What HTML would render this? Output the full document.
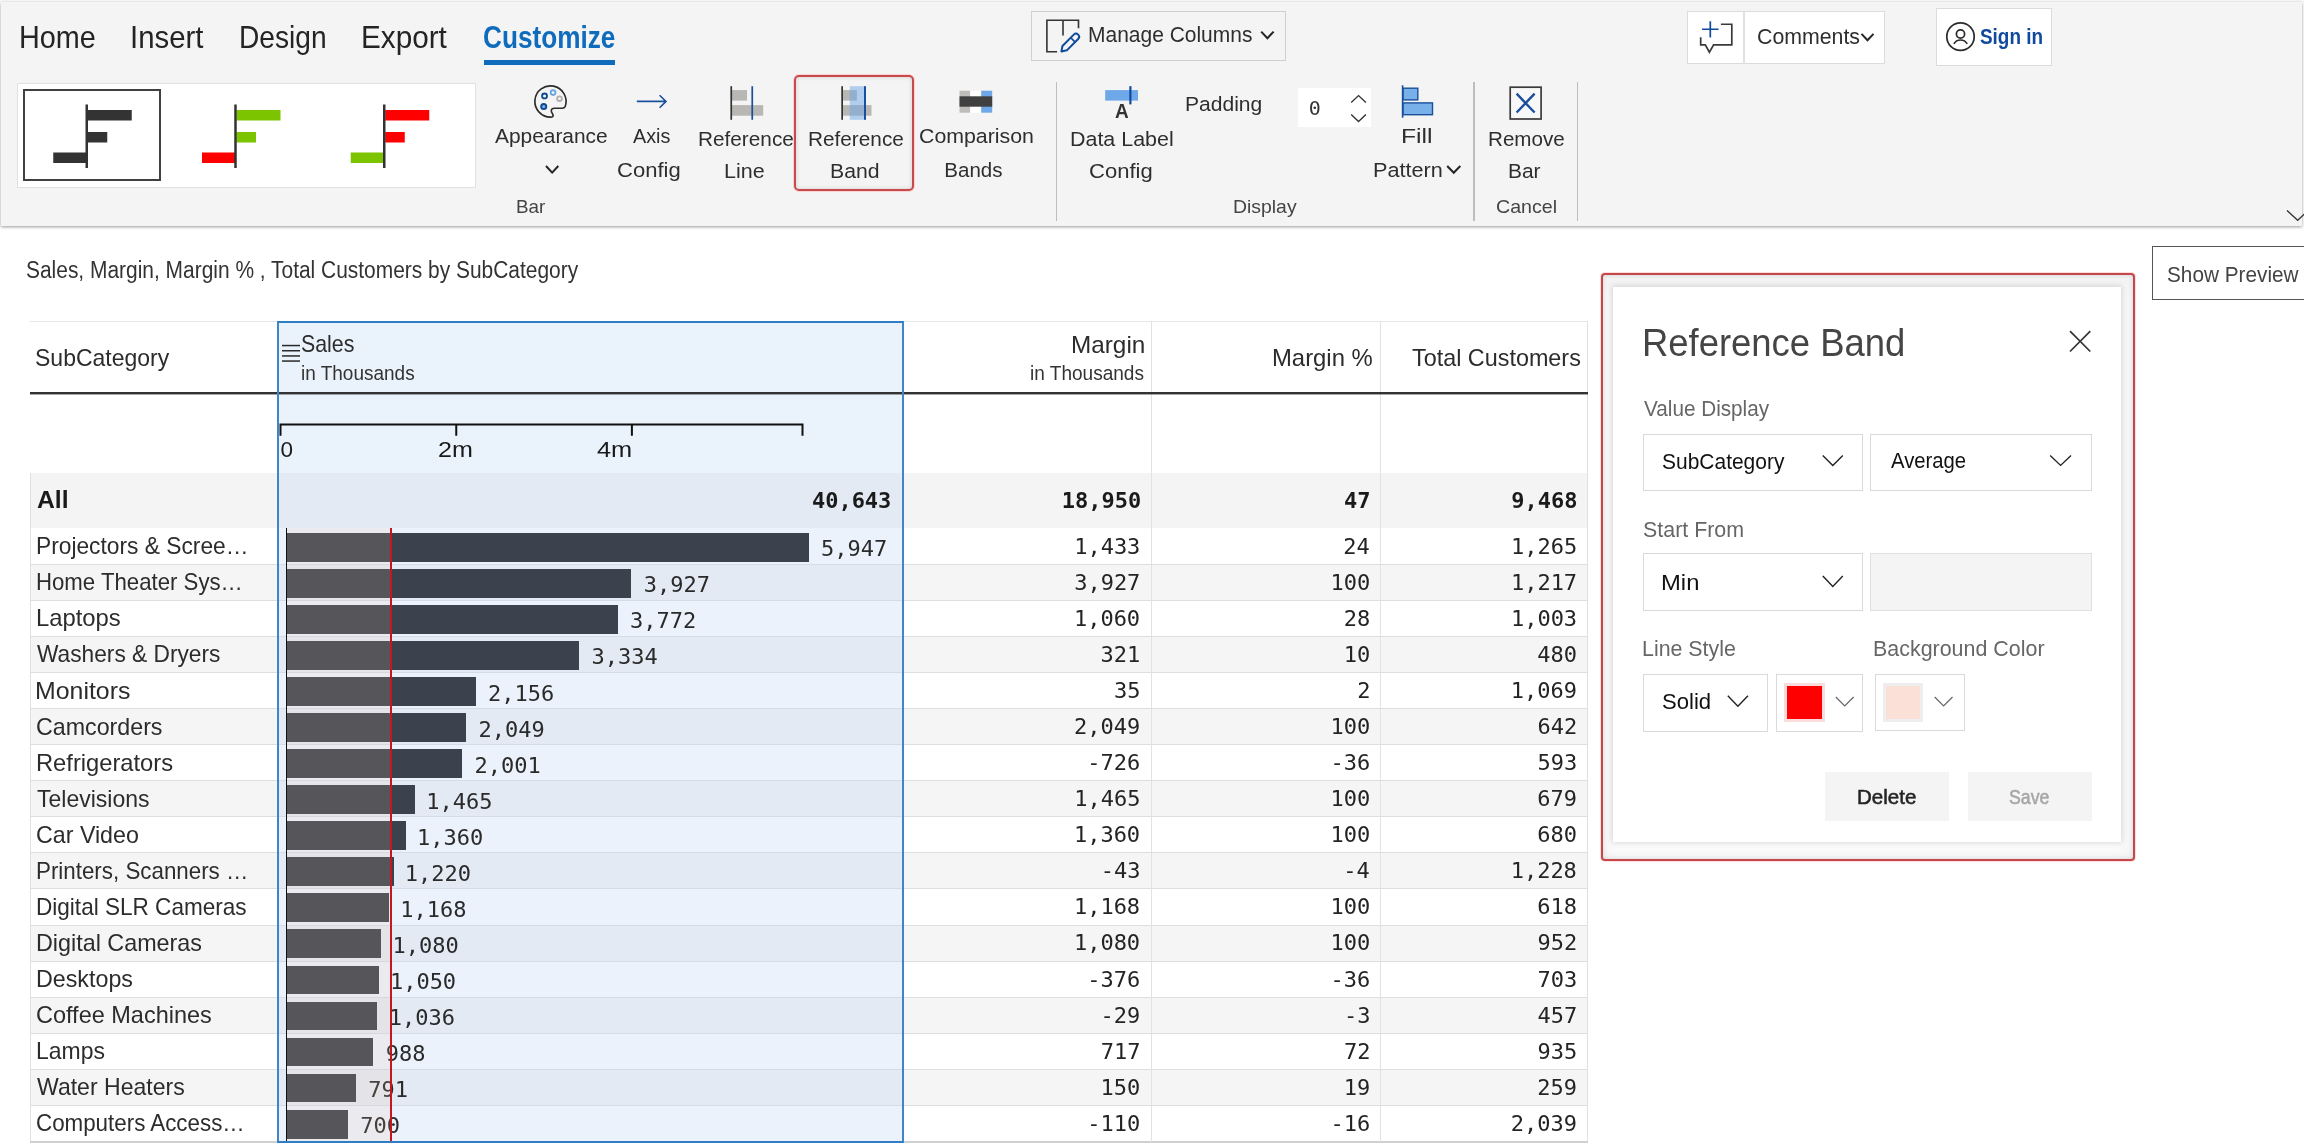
<!DOCTYPE html>
<html lang="en"><head><meta charset="utf-8"><title>Reference Band</title>
<style>
html,body{margin:0;padding:0;background:#fff;}
body{width:2304px;height:1148px;overflow:hidden;font-family:"Liberation Sans",sans-serif;}
#app{position:relative;width:2304px;height:1148px;overflow:hidden;background:transparent;will-change:transform;}
#app div,#app svg{position:absolute;box-sizing:border-box;}
.t{display:flex;align-items:baseline;white-space:nowrap;height:140px;}
.t>i{display:block;width:0;height:100px;flex:none;}
.t>span{display:block;flex:none;transform-origin:0 50%;line-height:1.2;}
.ic{overflow:visible;}
.m{font-family:"DejaVu Sans Mono","Liberation Mono",monospace;}
.sb>span{-webkit-text-stroke:0.55px currentColor;}

</style></head>
<body>
<div id="app">
<div style="left:0.00px;top:0.00px;width:2304.00px;height:2.00px;background:#f8f8f8;"></div>
<div class="ribbon" style="left:1.00px;top:2.00px;width:2301.00px;height:224.30px;background:#f4f4f4;box-shadow:0 1px 3px rgba(0,0,0,.4);"></div>
<div class="t" style="left:18.89px;top:-52.00px;"><i></i><span style="font-size:30.5px;color:#242424;transform:scaleX(0.9446);">Home</span></div>
<div class="t" style="left:129.81px;top:-52.00px;"><i></i><span style="font-size:30.5px;color:#242424;transform:scaleX(0.9618);">Insert</span></div>
<div class="t" style="left:239.19px;top:-52.00px;"><i></i><span style="font-size:30.5px;color:#242424;transform:scaleX(0.9227);">Design</span></div>
<div class="t" style="left:360.57px;top:-52.00px;"><i></i><span style="font-size:30.5px;color:#242424;transform:scaleX(0.9737);">Export</span></div>
<div class="t" style="left:483.43px;top:-52.00px;"><i></i><span style="font-size:30.5px;color:#0f6cbd;font-weight:700;transform:scaleX(0.8588);">Customize</span></div>
<div style="left:484.00px;top:60.00px;width:131.00px;height:4.50px;background:#0f6cbd;"></div>
<div style="left:16.50px;top:82.50px;width:459.50px;height:105.00px;background:#fff;border:1px solid #e1e1e1;"></div>
<div style="left:23.00px;top:89.00px;width:137.50px;height:92.00px;border:2px solid #404040;background:#fff;"></div>
<svg class="ic" style="left:40px;top:100px" width="420" height="72" viewBox="40 100 420 72"><rect x="87.75" y="110" width="44" height="10.5" fill="#333"/><rect x="87.75" y="132" width="19.5" height="10.5" fill="#333"/><rect x="53.25" y="152.5" width="33" height="10.5" fill="#333"/><rect x="85.5" y="104.5" width="2.5" height="63.5" fill="#333"/><rect x="236.5" y="110" width="44" height="10.5" fill="#7cc400"/><rect x="236.5" y="132" width="19.5" height="10.5" fill="#7cc400"/><rect x="202.0" y="152.5" width="33" height="10.5" fill="#ff0000"/><rect x="234.25" y="104.5" width="2.5" height="63.5" fill="#333"/><rect x="385.25" y="110" width="44" height="10.5" fill="#ff0000"/><rect x="385.25" y="132" width="19.5" height="10.5" fill="#ff0000"/><rect x="350.75" y="152.5" width="33" height="10.5" fill="#7cc400"/><rect x="383.0" y="104.5" width="2.5" height="63.5" fill="#333"/></svg>
<svg class="ic" style="left:532px;top:84px" width="36" height="36" viewBox="532 84 36 36"><path d="M550.800 117.050A15.600 15.600 0 1 1 565.300 106.300Q564.300 108.200 562.200 108.200H554.600Q551.200 108.200 551.300 111Q551.500 112.500 552.600 113.800Q553.600 115.600 552.600 116.600Q552 117.100 550.800 117.050Z" fill="none" stroke="#2c2c2c" stroke-width="1.650" stroke-linejoin="round"/><circle cx="544.540" cy="95.900" r="2.450" fill="#eef8ff" stroke="#0f4a8c" stroke-width="1.850"/><circle cx="553.060" cy="92.600" r="2.350" fill="#f2faff" stroke="#6aa5dc" stroke-width="1.850"/><circle cx="559.500" cy="98.700" r="2.350" fill="#fafafa" stroke="#b0b0b0" stroke-width="1.850"/><circle cx="543.700" cy="106.600" r="2.550" fill="#78b4f8" stroke="#0f4a8c" stroke-width="1.900"/></svg>
<div class="t" style="left:494.75px;top:42.50px;"><i></i><span style="font-size:20.5px;color:#2e2e2e;transform:scaleX(1.0192);">Appearance</span></div>
<svg class="ic" style="left:544px;top:163px" width="16" height="12" viewBox="544 163 16 12"><path d="M546 166L552.15 172.6L558.3 166" fill="none" stroke="#242424" stroke-width="2" stroke-linecap="butt" stroke-linejoin="miter"/></svg>
<svg class="ic" style="left:634px;top:92px" width="36" height="18" viewBox="634 92 36 18"><path d="M636.8 101.4H666M659.6 95.2L666 101.4L659.6 107.7" fill="none" stroke="#1a4f9c" stroke-width="1.6"/></svg>
<div class="t" style="left:633.00px;top:42.50px;"><i></i><span style="font-size:20.5px;color:#2e2e2e;transform:scaleX(0.9658);">Axis</span></div>
<div class="t" style="left:617.42px;top:76.50px;"><i></i><span style="font-size:20.5px;color:#2e2e2e;transform:scaleX(1.0755);">Config</span></div>
<svg class="ic" style="left:728px;top:84px" width="38" height="38" viewBox="728 84 38 38"><rect x="732" y="90.1" width="15" height="10.5" fill="#b9b7b3"/><rect x="732" y="105.100" width="31.200" height="10.600" fill="#b9b7b3"/><rect x="730.400" y="86.200" width="1.700" height="33.600" fill="#333"/><rect x="751.400" y="86.200" width="1.700" height="33.600" fill="#1a4f9c"/></svg>
<div class="t" style="left:698.08px;top:46.25px;"><i></i><span style="font-size:20.5px;color:#2e2e2e;transform:scaleX(1.0130);">Reference</span></div>
<div class="t" style="left:724.27px;top:77.50px;"><i></i><span style="font-size:20.5px;color:#2e2e2e;transform:scaleX(1.0497);">Line</span></div>
<div style="left:794.20px;top:74.80px;width:119.80px;height:116.20px;border:2px solid #c94a4d;border-radius:5px;box-shadow:0 0 0 1px rgba(255,170,170,.45),inset 0 0 4px rgba(0,0,0,.16);background:#f4f4f4;"></div>
<svg class="ic" style="left:839px;top:84px" width="38" height="38" viewBox="839 84 38 38"><rect x="843" y="90.1" width="13.900" height="10.500" fill="#b9b7b3"/><rect x="843" y="105.100" width="28.500" height="10.600" fill="#b9b7b3"/><rect x="849.750" y="86.200" width="14.500" height="33.600" fill="#6ea8e8" fill-opacity=".5"/><rect x="841.300" y="86.200" width="1.700" height="33.600" fill="#333"/><rect x="864" y="86.200" width="2" height="33.600" fill="#1a4f9c"/></svg>
<div class="t" style="left:808.08px;top:46.25px;"><i></i><span style="font-size:20.5px;color:#2e2e2e;transform:scaleX(1.0130);">Reference</span></div>
<div class="t" style="left:829.79px;top:77.50px;"><i></i><span style="font-size:20.5px;color:#2e2e2e;transform:scaleX(1.0345);">Band</span></div>
<svg class="ic" style="left:958px;top:89px" width="36" height="26" viewBox="958 89 36 26"><rect x="959.500" y="90.700" width="10.800" height="22" fill="#bfbdb9"/><rect x="970.300" y="90.700" width="10.900" height="22" fill="#fff"/><rect x="981.200" y="90.700" width="11" height="22" fill="#6ea8e8"/><rect x="959.500" y="96.300" width="32.700" height="10.400" fill="#404040"/></svg>
<div class="t" style="left:918.71px;top:42.50px;"><i></i><span style="font-size:20.5px;color:#2e2e2e;transform:scaleX(1.0397);">Comparison</span></div>
<div class="t" style="left:944.35px;top:76.50px;"><i></i><span style="font-size:20.5px;color:#2e2e2e;">Bands</span></div>
<div class="t" style="left:515.71px;top:112.50px;"><i></i><span style="font-size:19px;color:#444;transform:scaleX(0.9910);">Bar</span></div>
<div style="left:1056.10px;top:82.00px;width:1.30px;height:139.00px;background:#bdbdbd;"></div>
<div style="left:1473.30px;top:82.00px;width:1.30px;height:139.00px;background:#bdbdbd;"></div>
<div style="left:1576.90px;top:82.00px;width:1.30px;height:139.00px;background:#bdbdbd;"></div>
<svg class="ic" style="left:1104px;top:85px" width="36" height="22" viewBox="1104 85 36 22"><rect x="1105.200" y="90.100" width="32.800" height="10.500" fill="#6ea8e8"/><rect x="1129.300" y="86.200" width="2.200" height="18.200" fill="#0f4a9c"/></svg>
<div class="t" style="left:1114.56px;top:17.75px;"><i></i><span style="font-size:19.4px;color:#333;font-weight:700;transform:scaleX(0.9808);">A</span></div>
<div class="t" style="left:1070.28px;top:46.25px;"><i></i><span style="font-size:20.5px;color:#2e2e2e;transform:scaleX(1.0452);">Data Label</span></div>
<div class="t" style="left:1088.92px;top:77.50px;"><i></i><span style="font-size:20.5px;color:#2e2e2e;transform:scaleX(1.0755);">Config</span></div>
<div class="t" style="left:1185.31px;top:10.50px;"><i></i><span style="font-size:20.5px;color:#2e2e2e;transform:scaleX(1.0270);">Padding</span></div>
<div style="left:1298.20px;top:87.80px;width:72.60px;height:39.00px;background:#fff;"></div>
<div class="t" style="left:1308.75px;top:15.00px;"><i></i><span class="m" style="font-size:20px;color:#333;">0</span></div>
<svg class="ic" style="left:1349px;top:93px" width="20" height="32" viewBox="1349 93 20 32"><path d="M1351.2 102.5L1358.5500000000002 95.6L1365.9 102.5" fill="none" stroke="#333" stroke-width="1.4" stroke-linecap="butt" stroke-linejoin="miter"/><path d="M1351.2 114.6L1358.5500000000002 121.5L1365.9 114.6" fill="none" stroke="#333" stroke-width="1.4" stroke-linecap="butt" stroke-linejoin="miter"/></svg>
<svg class="ic" style="left:1400px;top:84px" width="36" height="36" viewBox="1400 84 36 36"><rect x="1403" y="88.200" width="14.800" height="11.700" fill="#78b0ea" stroke="#1a4f9c" stroke-width="1.4"/><rect x="1403" y="102.900" width="29.500" height="11.800" fill="#78b0ea" stroke="#1a4f9c" stroke-width="1.4"/><rect x="1401.800" y="85.250" width="1.600" height="32.500" fill="#1a4f9c"/></svg>
<div class="t" style="left:1401.26px;top:43.00px;"><i></i><span style="font-size:20.5px;color:#2e2e2e;transform:scaleX(1.2069);">Fill</span></div>
<div class="t" style="left:1372.76px;top:76.75px;"><i></i><span style="font-size:20.5px;color:#2e2e2e;transform:scaleX(1.0570);">Pattern</span></div>
<svg class="ic" style="left:1445px;top:163px" width="18" height="12" viewBox="1445 163 18 12"><path d="M1447.2 166L1453.75 172.8L1460.3 166" fill="none" stroke="#242424" stroke-width="2" stroke-linecap="butt" stroke-linejoin="miter"/></svg>
<svg class="ic" style="left:1507px;top:84px" width="38" height="38" viewBox="1507 84 38 38"><rect x="1510.200" y="87.200" width="30.900" height="31.800" fill="#f8f8f8" stroke="#3a3a3a" stroke-width="1.700"/><path d="M1516.600 93.700L1534.600 112.500M1534.600 93.700L1516.600 112.500" stroke="#1a4f9c" stroke-width="2.400" fill="none"/></svg>
<div class="t" style="left:1487.84px;top:46.25px;"><i></i><span style="font-size:20.5px;color:#2e2e2e;transform:scaleX(1.0061);">Remove</span></div>
<div class="t" style="left:1507.82px;top:77.50px;"><i></i><span style="font-size:20.5px;color:#2e2e2e;transform:scaleX(1.0201);">Bar</span></div>
<div class="t" style="left:1233.42px;top:113.00px;"><i></i><span style="font-size:19px;color:#444;transform:scaleX(1.0206);">Display</span></div>
<div class="t" style="left:1496.02px;top:113.00px;"><i></i><span style="font-size:19px;color:#444;transform:scaleX(1.0325);">Cancel</span></div>
<svg class="ic" style="left:2284px;top:208px" width="20" height="14" viewBox="2284 208 20 14"><path d="M2287 210.4L2297.7 220.3L2308.4 210.4" fill="none" stroke="#333" stroke-width="1.3" stroke-linecap="butt" stroke-linejoin="miter"/></svg>
<div style="left:1031.20px;top:11.00px;width:255.20px;height:50.00px;border:1.3px solid #d0d0d0;"></div>
<svg class="ic" style="left:1044px;top:18px" width="38" height="36" viewBox="1044 18 38 36"><path d="M1078.500 28.300V20.200H1046.900V51.700H1057.100M1063 20.200V35.600" fill="none" stroke="#333" stroke-width="1.600"/><g transform="translate(1061.400,51.400) rotate(-45)"><path d="M0 0L4.600 -3.100H20.600A3.100 3.100 0 0 1 20.600 3.100H4.600Z" fill="#f4f4f4" stroke="#0f4a9c" stroke-width="2" stroke-linejoin="round"/><path d="M16.300 -3.100V3.100" stroke="#0f4a9c" stroke-width="1.600"/></g></svg>
<div class="t" style="left:1088.12px;top:-58.20px;"><i></i><span style="font-size:21.8px;color:#2e2e2e;transform:scaleX(0.9623);">Manage Columns</span></div>
<svg class="ic" style="left:1258px;top:29px" width="18" height="12" viewBox="1258 29 18 12"><path d="M1261.2 31.6L1267.4 38.2L1273.6 31.6" fill="none" stroke="#242424" stroke-width="2" stroke-linecap="butt" stroke-linejoin="miter"/></svg>
<div style="left:1686.60px;top:11.20px;width:198.00px;height:53.00px;background:#fff;border:1.3px solid #dcdcdc;"></div>
<div style="left:1743.20px;top:12.00px;width:1.40px;height:51.50px;background:#e0e0e0;"></div>
<svg class="ic" style="left:1698px;top:19px" width="38" height="36" viewBox="1698 19 38 36"><path d="M1702.100 29.250H1718.600M1710.300 21.300V37.600" stroke="#0f4a9c" stroke-width="1.700" fill="none"/><path d="M1720.900 24.250H1731.800V44.900H1713.600L1709.400 52.250L1705.300 44.900H1700.700V37.200" stroke="#3a3a3a" stroke-width="1.700" fill="none" stroke-linejoin="miter"/></svg>
<div class="t" style="left:1756.83px;top:-55.75px;"><i></i><span style="font-size:22px;color:#2e2e2e;transform:scaleX(0.9684);">Comments</span></div>
<svg class="ic" style="left:1859px;top:31px" width="18" height="12" viewBox="1859 31 18 12"><path d="M1861.5 33.9L1867.5 40.3L1873.5 33.9" fill="none" stroke="#242424" stroke-width="2" stroke-linecap="butt" stroke-linejoin="miter"/></svg>
<div style="left:1936.20px;top:8.25px;width:116.00px;height:57.50px;background:#fff;border:1.3px solid #dcdcdc;"></div>
<svg class="ic" style="left:1944px;top:20px" width="34" height="34" viewBox="1944 20 34 34"><circle cx="1960.500" cy="36.650" r="13.700" fill="none" stroke="#2a2a2a" stroke-width="1.700"/><circle cx="1960.500" cy="34" r="4.100" fill="none" stroke="#2a2a2a" stroke-width="1.700"/><path d="M1953.900 43.900A7.600 7.600 0 0 1 1967.200 43.900" fill="none" stroke="#2a2a2a" stroke-width="1.700"/></svg>
<div class="t" style="left:1979.73px;top:-55.60px;"><i></i><span style="font-size:21.8px;color:#0f4a9c;font-weight:700;transform:scaleX(0.8671);">Sign in</span></div>
<div class="t" style="left:26.09px;top:177.50px;"><i></i><span style="font-size:23px;color:#333;transform:scaleX(0.9100);">Sales, Margin, Margin % , Total Customers by SubCategory</span></div>
<div style="left:2151.60px;top:246.30px;width:170.00px;height:54.00px;border:1.3px solid #555;background:#fff;"></div>
<div class="t" style="left:2167.34px;top:182.00px;"><i></i><span style="font-size:21.8px;color:#444;transform:scaleX(0.9526);">Show Preview</span></div>
<div style="left:30.00px;top:472.50px;width:1558.00px;height:55.80px;background:#f4f4f4;"></div>
<div style="left:30.00px;top:528.30px;width:1558.00px;height:36.56px;background:#fff;"></div>
<div style="left:30.00px;top:564.36px;width:1558.00px;height:36.56px;background:#f5f5f5;"></div>
<div style="left:30.00px;top:600.42px;width:1558.00px;height:36.56px;background:#fff;"></div>
<div style="left:30.00px;top:636.48px;width:1558.00px;height:36.56px;background:#f5f5f5;"></div>
<div style="left:30.00px;top:672.54px;width:1558.00px;height:36.56px;background:#fff;"></div>
<div style="left:30.00px;top:708.60px;width:1558.00px;height:36.56px;background:#f5f5f5;"></div>
<div style="left:30.00px;top:744.66px;width:1558.00px;height:36.56px;background:#fff;"></div>
<div style="left:30.00px;top:780.72px;width:1558.00px;height:36.56px;background:#f5f5f5;"></div>
<div style="left:30.00px;top:816.78px;width:1558.00px;height:36.56px;background:#fff;"></div>
<div style="left:30.00px;top:852.84px;width:1558.00px;height:36.56px;background:#f5f5f5;"></div>
<div style="left:30.00px;top:888.90px;width:1558.00px;height:36.56px;background:#fff;"></div>
<div style="left:30.00px;top:924.96px;width:1558.00px;height:36.56px;background:#f5f5f5;"></div>
<div style="left:30.00px;top:961.02px;width:1558.00px;height:36.56px;background:#fff;"></div>
<div style="left:30.00px;top:997.08px;width:1558.00px;height:36.56px;background:#f5f5f5;"></div>
<div style="left:30.00px;top:1033.14px;width:1558.00px;height:36.56px;background:#fff;"></div>
<div style="left:30.00px;top:1069.20px;width:1558.00px;height:36.56px;background:#f5f5f5;"></div>
<div style="left:30.00px;top:1105.26px;width:1558.00px;height:36.56px;background:#fff;"></div>
<div style="left:30.00px;top:321.00px;width:1558.00px;height:1.00px;background:#e6e6e6;"></div>
<div style="left:30.00px;top:472.50px;width:1.00px;height:669.82px;background:#e0e0e0;"></div>
<div style="left:1587.00px;top:321.00px;width:1.00px;height:821.32px;background:#e0e0e0;"></div>
<div style="left:30.00px;top:1141.32px;width:1558.00px;height:1.20px;background:#d0d0d0;"></div>
<div style="left:1150.80px;top:321.00px;width:1.00px;height:821.32px;background:#e2e2e2;"></div>
<div style="left:1380.00px;top:321.00px;width:1.00px;height:821.32px;background:#e2e2e2;"></div>
<div style="left:277.00px;top:320.50px;width:626.50px;height:152.00px;background:#eaf2fc;"></div>
<div style="left:277.00px;top:472.50px;width:626.50px;height:55.80px;background:#e3eaf4;"></div>
<div style="left:277.00px;top:528.30px;width:626.50px;height:36.56px;background:#ebf2fc;"></div>
<div style="left:277.00px;top:564.36px;width:626.50px;height:36.56px;background:#e3eaf4;"></div>
<div style="left:277.00px;top:600.42px;width:626.50px;height:36.56px;background:#ebf2fc;"></div>
<div style="left:277.00px;top:636.48px;width:626.50px;height:36.56px;background:#e3eaf4;"></div>
<div style="left:277.00px;top:672.54px;width:626.50px;height:36.56px;background:#ebf2fc;"></div>
<div style="left:277.00px;top:708.60px;width:626.50px;height:36.56px;background:#e3eaf4;"></div>
<div style="left:277.00px;top:744.66px;width:626.50px;height:36.56px;background:#ebf2fc;"></div>
<div style="left:277.00px;top:780.72px;width:626.50px;height:36.56px;background:#e3eaf4;"></div>
<div style="left:277.00px;top:816.78px;width:626.50px;height:36.56px;background:#ebf2fc;"></div>
<div style="left:277.00px;top:852.84px;width:626.50px;height:36.56px;background:#e3eaf4;"></div>
<div style="left:277.00px;top:888.90px;width:626.50px;height:36.56px;background:#ebf2fc;"></div>
<div style="left:277.00px;top:924.96px;width:626.50px;height:36.56px;background:#e3eaf4;"></div>
<div style="left:277.00px;top:961.02px;width:626.50px;height:36.56px;background:#ebf2fc;"></div>
<div style="left:277.00px;top:997.08px;width:626.50px;height:36.56px;background:#e3eaf4;"></div>
<div style="left:277.00px;top:1033.14px;width:626.50px;height:36.56px;background:#ebf2fc;"></div>
<div style="left:277.00px;top:1069.20px;width:626.50px;height:36.56px;background:#e3eaf4;"></div>
<div style="left:277.00px;top:1105.26px;width:626.50px;height:36.56px;background:#ebf2fc;"></div>
<div style="left:30.00px;top:564.00px;width:1558.00px;height:1.00px;background:#dedede;"></div>
<div style="left:277.00px;top:564.00px;width:626.50px;height:1.00px;background:#d3dce9;"></div>
<div style="left:30.00px;top:600.00px;width:1558.00px;height:1.00px;background:#dedede;"></div>
<div style="left:277.00px;top:600.00px;width:626.50px;height:1.00px;background:#d3dce9;"></div>
<div style="left:30.00px;top:636.00px;width:1558.00px;height:1.00px;background:#dedede;"></div>
<div style="left:277.00px;top:636.00px;width:626.50px;height:1.00px;background:#d3dce9;"></div>
<div style="left:30.00px;top:672.00px;width:1558.00px;height:1.00px;background:#dedede;"></div>
<div style="left:277.00px;top:672.00px;width:626.50px;height:1.00px;background:#d3dce9;"></div>
<div style="left:30.00px;top:708.00px;width:1558.00px;height:1.00px;background:#dedede;"></div>
<div style="left:277.00px;top:708.00px;width:626.50px;height:1.00px;background:#d3dce9;"></div>
<div style="left:30.00px;top:744.00px;width:1558.00px;height:1.00px;background:#dedede;"></div>
<div style="left:277.00px;top:744.00px;width:626.50px;height:1.00px;background:#d3dce9;"></div>
<div style="left:30.00px;top:780.00px;width:1558.00px;height:1.00px;background:#dedede;"></div>
<div style="left:277.00px;top:780.00px;width:626.50px;height:1.00px;background:#d3dce9;"></div>
<div style="left:30.00px;top:816.00px;width:1558.00px;height:1.00px;background:#dedede;"></div>
<div style="left:277.00px;top:816.00px;width:626.50px;height:1.00px;background:#d3dce9;"></div>
<div style="left:30.00px;top:852.00px;width:1558.00px;height:1.00px;background:#dedede;"></div>
<div style="left:277.00px;top:852.00px;width:626.50px;height:1.00px;background:#d3dce9;"></div>
<div style="left:30.00px;top:888.00px;width:1558.00px;height:1.00px;background:#dedede;"></div>
<div style="left:277.00px;top:888.00px;width:626.50px;height:1.00px;background:#d3dce9;"></div>
<div style="left:30.00px;top:925.00px;width:1558.00px;height:1.00px;background:#dedede;"></div>
<div style="left:277.00px;top:925.00px;width:626.50px;height:1.00px;background:#d3dce9;"></div>
<div style="left:30.00px;top:961.00px;width:1558.00px;height:1.00px;background:#dedede;"></div>
<div style="left:277.00px;top:961.00px;width:626.50px;height:1.00px;background:#d3dce9;"></div>
<div style="left:30.00px;top:997.00px;width:1558.00px;height:1.00px;background:#dedede;"></div>
<div style="left:277.00px;top:997.00px;width:626.50px;height:1.00px;background:#d3dce9;"></div>
<div style="left:30.00px;top:1033.00px;width:1558.00px;height:1.00px;background:#dedede;"></div>
<div style="left:277.00px;top:1033.00px;width:626.50px;height:1.00px;background:#d3dce9;"></div>
<div style="left:30.00px;top:1069.00px;width:1558.00px;height:1.00px;background:#dedede;"></div>
<div style="left:277.00px;top:1069.00px;width:626.50px;height:1.00px;background:#d3dce9;"></div>
<div style="left:30.00px;top:1105.00px;width:1558.00px;height:1.00px;background:#dedede;"></div>
<div style="left:277.00px;top:1105.00px;width:626.50px;height:1.00px;background:#d3dce9;"></div>
<div style="left:30.00px;top:392.00px;width:1558.00px;height:2.00px;background:#333;"></div>
<div style="left:30.00px;top:394.00px;width:1558.00px;height:1.00px;background:rgba(60,60,60,.45);"></div>
<div class="t" style="left:35.24px;top:265.50px;"><i></i><span style="font-size:24px;color:#2c2c2c;transform:scaleX(0.9583);">SubCategory</span></div>
<div class="t" style="left:301.07px;top:252.00px;"><i></i><span style="font-size:24px;color:#2c2c2c;transform:scaleX(0.8899);">Sales</span></div>
<div class="t" style="left:300.75px;top:279.50px;"><i></i><span style="font-size:20.5px;color:#333;transform:scaleX(0.9262);">in Thousands</span></div>
<div class="t" style="left:1070.52px;top:252.50px;"><i></i><span style="font-size:24px;color:#2c2c2c;transform:scaleX(1.0129);">Margin</span></div>
<div class="t" style="left:1030.00px;top:279.50px;"><i></i><span style="font-size:20.5px;color:#333;transform:scaleX(0.9283);">in Thousands</span></div>
<div class="t" style="left:1272.06px;top:265.50px;"><i></i><span style="font-size:24px;color:#2c2c2c;transform:scaleX(0.9939);">Margin %</span></div>
<div class="t" style="left:1412.01px;top:265.50px;"><i></i><span style="font-size:24px;color:#2c2c2c;transform:scaleX(0.9736);">Total Customers</span></div>
<svg class="ic" style="left:281px;top:343px" width="22" height="20" viewBox="281 343 22 20"><rect x="282" y="344.8" width="18" height="1.500" fill="#2a2a2a"/><rect x="282" y="350" width="18" height="1.500" fill="#2a2a2a"/><rect x="282" y="355.2" width="18" height="1.500" fill="#2a2a2a"/><rect x="282" y="360.3" width="18" height="1.500" fill="#2a2a2a"/></svg>
<svg class="ic" style="left:278px;top:420px" width="530" height="20" viewBox="278 420 530 20"><path d="M280.500 435.700V424.400H802.500V435.700M456.250 424.400V435.700M631.900 424.400V435.700" fill="none" stroke="#111" stroke-width="2"/></svg>
<div class="t" style="left:280.40px;top:356.75px;"><i></i><span style="font-size:22.5px;color:#1a1a1a;">0</span></div>
<div class="t" style="left:438.27px;top:356.75px;"><i></i><span style="font-size:22.5px;color:#1a1a1a;transform:scaleX(1.1150);">2m</span></div>
<div class="t" style="left:597.44px;top:356.75px;"><i></i><span style="font-size:22.5px;color:#1a1a1a;transform:scaleX(1.1263);">4m</span></div>
<div style="left:286.50px;top:532.80px;width:522.21px;height:28.80px;background:#3c424d;"></div>
<div style="left:286.50px;top:568.86px;width:344.83px;height:28.80px;background:#3c424d;"></div>
<div style="left:286.50px;top:604.92px;width:331.22px;height:28.80px;background:#3c424d;"></div>
<div style="left:286.50px;top:640.98px;width:292.76px;height:28.80px;background:#3c424d;"></div>
<div style="left:286.50px;top:677.04px;width:189.32px;height:28.80px;background:#3c424d;"></div>
<div style="left:286.50px;top:713.10px;width:179.92px;height:28.80px;background:#3c424d;"></div>
<div style="left:286.50px;top:749.16px;width:175.71px;height:28.80px;background:#3c424d;"></div>
<div style="left:286.50px;top:785.22px;width:128.64px;height:28.80px;background:#3c424d;"></div>
<div style="left:286.50px;top:821.28px;width:119.42px;height:28.80px;background:#3c424d;"></div>
<div style="left:286.50px;top:857.34px;width:107.13px;height:28.80px;background:#3c424d;"></div>
<div style="left:286.50px;top:893.40px;width:102.56px;height:28.80px;background:#3c424d;"></div>
<div style="left:286.50px;top:929.46px;width:94.83px;height:28.80px;background:#3c424d;"></div>
<div style="left:286.50px;top:965.52px;width:92.20px;height:28.80px;background:#3c424d;"></div>
<div style="left:286.50px;top:1001.58px;width:90.97px;height:28.80px;background:#3c424d;"></div>
<div style="left:286.50px;top:1037.64px;width:86.76px;height:28.80px;background:#3c424d;"></div>
<div style="left:286.50px;top:1073.70px;width:69.46px;height:28.80px;background:#3c424d;"></div>
<div style="left:286.50px;top:1109.76px;width:61.47px;height:28.80px;background:#3c424d;"></div>
<div class="t" style="left:35.65px;top:454.30px;"><i></i><span style="font-size:24px;color:#2c2c2c;transform:scaleX(0.9481);">Projectors &amp; Scree…</span></div>
<div class="t" style="left:821.01px;top:456.30px;"><i></i><span class="m" style="font-size:22px;color:#2a2a2a;">5,947</span></div>
<div class="t" style="left:1074.15px;top:453.80px;"><i></i><span class="m" style="font-size:22px;color:#242424;">1,433</span></div>
<div class="t" style="left:1343.30px;top:453.80px;"><i></i><span class="m" style="font-size:22px;color:#242424;">24</span></div>
<div class="t" style="left:1511.00px;top:453.80px;"><i></i><span class="m" style="font-size:22px;color:#242424;">1,265</span></div>
<div class="t" style="left:35.70px;top:490.36px;"><i></i><span style="font-size:24px;color:#2c2c2c;transform:scaleX(0.9247);">Home Theater Sys…</span></div>
<div class="t" style="left:643.68px;top:492.36px;"><i></i><span class="m" style="font-size:22px;color:#2a2a2a;">3,927</span></div>
<div class="t" style="left:1074.15px;top:489.86px;"><i></i><span class="m" style="font-size:22px;color:#242424;">3,927</span></div>
<div class="t" style="left:1330.40px;top:489.86px;"><i></i><span class="m" style="font-size:22px;color:#242424;">100</span></div>
<div class="t" style="left:1510.90px;top:489.86px;"><i></i><span class="m" style="font-size:22px;color:#242424;">1,217</span></div>
<div class="t" style="left:35.56px;top:526.42px;"><i></i><span style="font-size:24px;color:#2c2c2c;transform:scaleX(0.9927);">Laptops</span></div>
<div class="t" style="left:630.07px;top:528.42px;"><i></i><span class="m" style="font-size:22px;color:#2a2a2a;">3,772</span></div>
<div class="t" style="left:1073.90px;top:525.92px;"><i></i><span class="m" style="font-size:22px;color:#242424;">1,060</span></div>
<div class="t" style="left:1343.65px;top:525.92px;"><i></i><span class="m" style="font-size:22px;color:#242424;">28</span></div>
<div class="t" style="left:1510.90px;top:525.92px;"><i></i><span class="m" style="font-size:22px;color:#242424;">1,003</span></div>
<div class="t" style="left:37.41px;top:562.48px;"><i></i><span style="font-size:24px;color:#2c2c2c;transform:scaleX(0.9463);">Washers &amp; Dryers</span></div>
<div class="t" style="left:591.61px;top:564.48px;"><i></i><span class="m" style="font-size:22px;color:#2a2a2a;">3,334</span></div>
<div class="t" style="left:1100.45px;top:561.98px;"><i></i><span class="m" style="font-size:22px;color:#242424;">321</span></div>
<div class="t" style="left:1343.65px;top:561.98px;"><i></i><span class="m" style="font-size:22px;color:#242424;">10</span></div>
<div class="t" style="left:1537.15px;top:561.98px;"><i></i><span class="m" style="font-size:22px;color:#242424;">480</span></div>
<div class="t" style="left:35.48px;top:598.54px;"><i></i><span style="font-size:24px;color:#2c2c2c;transform:scaleX(1.0364);">Monitors</span></div>
<div class="t" style="left:488.02px;top:600.54px;"><i></i><span class="m" style="font-size:22px;color:#2a2a2a;">2,156</span></div>
<div class="t" style="left:1114.00px;top:598.04px;"><i></i><span class="m" style="font-size:22px;color:#242424;">35</span></div>
<div class="t" style="left:1357.35px;top:598.04px;"><i></i><span class="m" style="font-size:22px;color:#242424;">2</span></div>
<div class="t" style="left:1510.70px;top:598.04px;"><i></i><span class="m" style="font-size:22px;color:#242424;">1,069</span></div>
<div class="t" style="left:36.34px;top:634.60px;"><i></i><span style="font-size:24px;color:#2c2c2c;transform:scaleX(0.9677);">Camcorders</span></div>
<div class="t" style="left:478.62px;top:636.60px;"><i></i><span class="m" style="font-size:22px;color:#2a2a2a;">2,049</span></div>
<div class="t" style="left:1073.95px;top:634.10px;"><i></i><span class="m" style="font-size:22px;color:#242424;">2,049</span></div>
<div class="t" style="left:1330.40px;top:634.10px;"><i></i><span class="m" style="font-size:22px;color:#242424;">100</span></div>
<div class="t" style="left:1537.60px;top:634.10px;"><i></i><span class="m" style="font-size:22px;color:#242424;">642</span></div>
<div class="t" style="left:35.57px;top:670.66px;"><i></i><span style="font-size:24px;color:#2c2c2c;transform:scaleX(0.9879);">Refrigerators</span></div>
<div class="t" style="left:474.41px;top:672.66px;"><i></i><span class="m" style="font-size:22px;color:#2a2a2a;">2,001</span></div>
<div class="t" style="left:1087.15px;top:670.16px;"><i></i><span class="m" style="font-size:22px;color:#242424;">-726</span></div>
<div class="t" style="left:1330.40px;top:670.16px;"><i></i><span class="m" style="font-size:22px;color:#242424;">-36</span></div>
<div class="t" style="left:1537.40px;top:670.16px;"><i></i><span class="m" style="font-size:22px;color:#242424;">593</span></div>
<div class="t" style="left:37.02px;top:706.72px;"><i></i><span style="font-size:24px;color:#2c2c2c;transform:scaleX(0.9586);">Televisions</span></div>
<div class="t" style="left:426.34px;top:708.72px;"><i></i><span class="m" style="font-size:22px;color:#2a2a2a;">1,465</span></div>
<div class="t" style="left:1074.25px;top:706.22px;"><i></i><span class="m" style="font-size:22px;color:#242424;">1,465</span></div>
<div class="t" style="left:1330.40px;top:706.22px;"><i></i><span class="m" style="font-size:22px;color:#242424;">100</span></div>
<div class="t" style="left:1537.20px;top:706.22px;"><i></i><span class="m" style="font-size:22px;color:#242424;">679</span></div>
<div class="t" style="left:36.34px;top:742.78px;"><i></i><span style="font-size:24px;color:#2c2c2c;transform:scaleX(0.9678);">Car Video</span></div>
<div class="t" style="left:417.12px;top:744.78px;"><i></i><span class="m" style="font-size:22px;color:#2a2a2a;">1,360</span></div>
<div class="t" style="left:1073.90px;top:742.28px;"><i></i><span class="m" style="font-size:22px;color:#242424;">1,360</span></div>
<div class="t" style="left:1330.40px;top:742.28px;"><i></i><span class="m" style="font-size:22px;color:#242424;">100</span></div>
<div class="t" style="left:1537.15px;top:742.28px;"><i></i><span class="m" style="font-size:22px;color:#242424;">680</span></div>
<div class="t" style="left:35.68px;top:778.84px;"><i></i><span style="font-size:24px;color:#2c2c2c;transform:scaleX(0.9309);">Printers, Scanners …</span></div>
<div class="t" style="left:404.83px;top:780.84px;"><i></i><span class="m" style="font-size:22px;color:#2a2a2a;">1,220</span></div>
<div class="t" style="left:1100.65px;top:778.34px;"><i></i><span class="m" style="font-size:22px;color:#242424;">-43</span></div>
<div class="t" style="left:1343.30px;top:778.34px;"><i></i><span class="m" style="font-size:22px;color:#242424;">-4</span></div>
<div class="t" style="left:1510.65px;top:778.34px;"><i></i><span class="m" style="font-size:22px;color:#242424;">1,228</span></div>
<div class="t" style="left:35.67px;top:814.90px;"><i></i><span style="font-size:24px;color:#2c2c2c;transform:scaleX(0.9401);">Digital SLR Cameras</span></div>
<div class="t" style="left:400.26px;top:816.90px;"><i></i><span class="m" style="font-size:22px;color:#2a2a2a;">1,168</span></div>
<div class="t" style="left:1073.90px;top:814.40px;"><i></i><span class="m" style="font-size:22px;color:#242424;">1,168</span></div>
<div class="t" style="left:1330.40px;top:814.40px;"><i></i><span class="m" style="font-size:22px;color:#242424;">100</span></div>
<div class="t" style="left:1537.15px;top:814.40px;"><i></i><span class="m" style="font-size:22px;color:#242424;">618</span></div>
<div class="t" style="left:35.60px;top:850.96px;"><i></i><span style="font-size:24px;color:#2c2c2c;transform:scaleX(0.9723);">Digital Cameras</span></div>
<div class="t" style="left:392.53px;top:852.96px;"><i></i><span class="m" style="font-size:22px;color:#2a2a2a;">1,080</span></div>
<div class="t" style="left:1073.90px;top:850.46px;"><i></i><span class="m" style="font-size:22px;color:#242424;">1,080</span></div>
<div class="t" style="left:1330.40px;top:850.46px;"><i></i><span class="m" style="font-size:22px;color:#242424;">100</span></div>
<div class="t" style="left:1537.60px;top:850.46px;"><i></i><span class="m" style="font-size:22px;color:#242424;">952</span></div>
<div class="t" style="left:35.61px;top:887.02px;"><i></i><span style="font-size:24px;color:#2c2c2c;transform:scaleX(0.9692);">Desktops</span></div>
<div class="t" style="left:389.90px;top:889.02px;"><i></i><span class="m" style="font-size:22px;color:#2a2a2a;">1,050</span></div>
<div class="t" style="left:1087.15px;top:886.52px;"><i></i><span class="m" style="font-size:22px;color:#242424;">-376</span></div>
<div class="t" style="left:1330.40px;top:886.52px;"><i></i><span class="m" style="font-size:22px;color:#242424;">-36</span></div>
<div class="t" style="left:1537.40px;top:886.52px;"><i></i><span class="m" style="font-size:22px;color:#242424;">703</span></div>
<div class="t" style="left:36.33px;top:923.08px;"><i></i><span style="font-size:24px;color:#2c2c2c;transform:scaleX(0.9783);">Coffee Machines</span></div>
<div class="t" style="left:388.67px;top:925.08px;"><i></i><span class="m" style="font-size:22px;color:#2a2a2a;">1,036</span></div>
<div class="t" style="left:1100.45px;top:922.58px;"><i></i><span class="m" style="font-size:22px;color:#242424;">-29</span></div>
<div class="t" style="left:1343.90px;top:922.58px;"><i></i><span class="m" style="font-size:22px;color:#242424;">-3</span></div>
<div class="t" style="left:1537.40px;top:922.58px;"><i></i><span class="m" style="font-size:22px;color:#242424;">457</span></div>
<div class="t" style="left:35.63px;top:959.14px;"><i></i><span style="font-size:24px;color:#2c2c2c;transform:scaleX(0.9567);">Lamps</span></div>
<div class="t" style="left:385.71px;top:961.14px;"><i></i><span class="m" style="font-size:22px;color:#2a2a2a;">988</span></div>
<div class="t" style="left:1100.65px;top:958.64px;"><i></i><span class="m" style="font-size:22px;color:#242424;">717</span></div>
<div class="t" style="left:1344.10px;top:958.64px;"><i></i><span class="m" style="font-size:22px;color:#242424;">72</span></div>
<div class="t" style="left:1537.50px;top:958.64px;"><i></i><span class="m" style="font-size:22px;color:#242424;">935</span></div>
<div class="t" style="left:37.40px;top:995.20px;"><i></i><span style="font-size:24px;color:#2c2c2c;transform:scaleX(0.9601);">Water Heaters</span></div>
<div class="t" style="left:368.31px;top:997.20px;"><i></i><span class="m" style="font-size:22px;color:#2a2a2a;">791</span></div>
<div class="t" style="left:1100.40px;top:994.70px;"><i></i><span class="m" style="font-size:22px;color:#242424;">150</span></div>
<div class="t" style="left:1343.70px;top:994.70px;"><i></i><span class="m" style="font-size:22px;color:#242424;">19</span></div>
<div class="t" style="left:1537.20px;top:994.70px;"><i></i><span class="m" style="font-size:22px;color:#242424;">259</span></div>
<div class="t" style="left:36.38px;top:1031.26px;"><i></i><span style="font-size:24px;color:#2c2c2c;transform:scaleX(0.9312);">Computers Access…</span></div>
<div class="t" style="left:360.32px;top:1033.26px;"><i></i><span class="m" style="font-size:22px;color:#2a2a2a;">700</span></div>
<div class="t" style="left:1087.15px;top:1030.76px;"><i></i><span class="m" style="font-size:22px;color:#242424;">-110</span></div>
<div class="t" style="left:1330.40px;top:1030.76px;"><i></i><span class="m" style="font-size:22px;color:#242424;">-16</span></div>
<div class="t" style="left:1510.70px;top:1030.76px;"><i></i><span class="m" style="font-size:22px;color:#242424;">2,039</span></div>
<div style="left:287.00px;top:528.30px;width:103.75px;height:613.02px;background:rgba(238,195,170,.15);"></div>
<div style="left:285.50px;top:528.30px;width:1.60px;height:613.02px;background:#111;"></div>
<div style="left:389.50px;top:528.30px;width:2.50px;height:613.02px;background:#c8161d;"></div>
<div class="t" style="left:36.92px;top:407.50px;"><i></i><span style="font-size:23.6px;color:#1a1a1a;font-weight:700;transform:scaleX(1.0465);">All</span></div>
<div class="t" style="left:811.90px;top:407.50px;"><i></i><span class="m" style="font-size:22px;color:#1a1a1a;font-weight:700;">40,643</span></div>
<div class="t" style="left:1061.80px;top:407.50px;"><i></i><span class="m" style="font-size:22px;color:#1a1a1a;font-weight:700;">18,950</span></div>
<div class="t" style="left:1343.90px;top:407.50px;"><i></i><span class="m" style="font-size:22px;color:#1a1a1a;font-weight:700;">47</span></div>
<div class="t" style="left:1511.35px;top:407.50px;"><i></i><span class="m" style="font-size:22px;color:#1a1a1a;font-weight:700;">9,468</span></div>
<div style="left:277.00px;top:320.50px;width:626.50px;height:822.82px;border:2px solid #2f7dc4;border-left-color:#3f86c8;border-right-color:#3f86c8;"></div>
<div style="left:1601.20px;top:272.60px;width:533.80px;height:588.80px;border:2px solid #c4484b;border-radius:4px;background:#f4f4f4;overflow:hidden;box-shadow:0 0 0 1px rgba(255,170,170,.4),inset 0 0 5px rgba(0,0,0,.14);"><div style="left:9.800px;top:12.700px;width:508.250px;height:555.200px;background:#fff;box-shadow:0 0 6px 1px rgba(0,0,0,.16),0 6px 10px 4px rgba(255,255,255,.9);"></div></div>
<div class="t" style="left:1641.53px;top:256.25px;"><i></i><span style="font-size:38px;color:#454545;transform:scaleX(0.9588);">Reference Band</span></div>
<svg class="ic" style="left:2067px;top:328px" width="26" height="26" viewBox="2067 328 26 26"><path d="M2070 331.200L2090.300 351.500M2090.300 331.200L2070 351.500" stroke="#333" stroke-width="1.700" fill="none"/></svg>
<div class="t" style="left:1643.66px;top:316.25px;"><i></i><span style="font-size:22.5px;color:#666;transform:scaleX(0.9205);">Value Display</span></div>
<div style="left:1642.50px;top:433.50px;width:220.00px;height:57.80px;background:#fff;border:1.3px solid #d9d9d9;"></div>
<div style="left:1870.00px;top:433.50px;width:221.80px;height:57.80px;background:#fff;border:1.3px solid #d9d9d9;"></div>
<div class="t" style="left:1662.07px;top:368.75px;"><i></i><span style="font-size:22.5px;color:#111;transform:scaleX(0.9321);">SubCategory</span></div>
<div class="t" style="left:1891.25px;top:368.25px;"><i></i><span style="font-size:22.5px;color:#111;transform:scaleX(0.9005);">Average</span></div>
<svg class="ic" style="left:1820px;top:453px" width="26" height="15" viewBox="1820 453 26 15"><path d="M1822.8 455.6L1832.8 465.4L1842.8 455.6" fill="none" stroke="#222" stroke-width="1.4" stroke-linecap="butt" stroke-linejoin="miter"/></svg>
<svg class="ic" style="left:2048px;top:453px" width="26" height="15" viewBox="2048 453 26 15"><path d="M2050.2 455.6L2060.6 465.4L2071 455.6" fill="none" stroke="#222" stroke-width="1.4" stroke-linecap="butt" stroke-linejoin="miter"/></svg>
<div class="t" style="left:1642.80px;top:437.00px;"><i></i><span style="font-size:22.5px;color:#666;transform:scaleX(0.9513);">Start From</span></div>
<div style="left:1642.50px;top:553.00px;width:220.00px;height:57.80px;background:#fff;border:1.3px solid #d9d9d9;"></div>
<div style="left:1870.00px;top:553.00px;width:221.80px;height:57.80px;background:#f4f4f4;border:1.3px solid #e0e0e0;"></div>
<div class="t" style="left:1661.09px;top:489.50px;"><i></i><span style="font-size:22.5px;color:#111;transform:scaleX(1.0590);">Min</span></div>
<svg class="ic" style="left:1820px;top:573px" width="26" height="15" viewBox="1820 573 26 15"><path d="M1822.8 576L1832.8 586.6L1842.8 576" fill="none" stroke="#222" stroke-width="1.4" stroke-linecap="butt" stroke-linejoin="miter"/></svg>
<div class="t" style="left:1641.54px;top:556.25px;"><i></i><span style="font-size:22.5px;color:#666;transform:scaleX(0.9500);">Line Style</span></div>
<div class="t" style="left:1873.29px;top:556.25px;"><i></i><span style="font-size:22.5px;color:#666;transform:scaleX(0.9525);">Background Color</span></div>
<div style="left:1642.50px;top:674.20px;width:125.50px;height:57.60px;background:#fff;border:1.3px solid #d9d9d9;"></div>
<div class="t" style="left:1661.52px;top:608.75px;"><i></i><span style="font-size:22.5px;color:#111;transform:scaleX(0.9821);">Solid</span></div>
<svg class="ic" style="left:1725px;top:693px" width="26" height="15" viewBox="1725 693 26 15"><path d="M1727.8 695.8L1737.9 706.2L1748 695.8" fill="none" stroke="#222" stroke-width="1.4" stroke-linecap="butt" stroke-linejoin="miter"/></svg>
<div style="left:1775.50px;top:674.20px;width:87.00px;height:57.60px;background:#fff;border:1.3px solid #d9d9d9;"></div>
<div style="left:1783.75px;top:682.50px;width:41.25px;height:39.25px;background:#fbdcdc;"></div>
<div style="left:1787.00px;top:685.75px;width:35.00px;height:33.00px;background:#ff0000;"></div>
<svg class="ic" style="left:1833px;top:694px" width="24" height="14" viewBox="1833 694 24 14"><path d="M1835.8 697L1844.6999999999998 706L1853.6 697" fill="none" stroke="#666" stroke-width="1.2" stroke-linecap="butt" stroke-linejoin="miter"/></svg>
<div style="left:1874.50px;top:674.20px;width:90.00px;height:56.40px;background:#fff;border:1.3px solid #d9d9d9;"></div>
<div style="left:1883.00px;top:682.50px;width:39.50px;height:39.25px;background:#eeeeee;"></div>
<div style="left:1886.25px;top:685.75px;width:33.75px;height:33.00px;background:#fbe0d8;"></div>
<svg class="ic" style="left:1932px;top:694px" width="24" height="14" viewBox="1932 694 24 14"><path d="M1934.7 697L1943.6 706L1952.5 697" fill="none" stroke="#666" stroke-width="1.2" stroke-linecap="butt" stroke-linejoin="miter"/></svg>
<div style="left:1825.00px;top:771.75px;width:124.25px;height:49.00px;background:#f4f4f4;"></div>
<div style="left:1968.00px;top:771.75px;width:123.75px;height:49.00px;background:#f4f4f4;"></div>
<div class="t sb" style="left:1857.09px;top:703.75px;"><i></i><span style="font-size:21px;color:#242424;transform:scaleX(0.9776);">Delete</span></div>
<div class="t sb" style="left:2009.20px;top:703.75px;"><i></i><span style="font-size:21px;color:#a6a6a6;transform:scaleX(0.8424);">Save</span></div>
</div>
</body></html>
